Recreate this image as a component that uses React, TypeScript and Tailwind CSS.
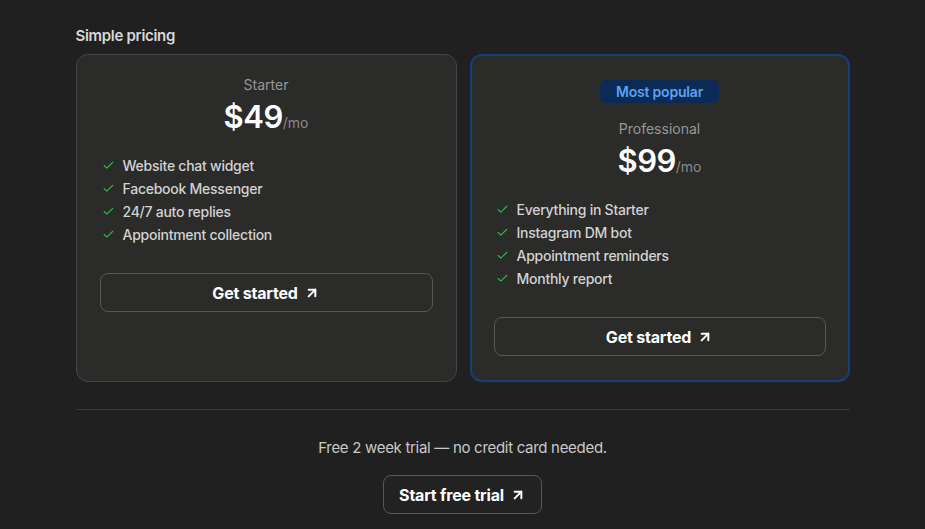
import { ArrowUpRight, Check } from "lucide-react";

interface Plan {
  name: string;
  price: string;
  features: string[];
  popular?: boolean;
}

const plans: Plan[] = [
  {
    name: "Starter",
    price: "$49",
    features: ["Website chat widget", "Facebook Messenger", "24/7 auto replies", "Appointment collection"],
  },
  {
    name: "Professional",
    price: "$99",
    popular: true,
    features: ["Everything in Starter", "Instagram DM bot", "Appointment reminders", "Monthly report"],
  },
];

const PlanCard = ({ plan }: { plan: Plan }) => {
  return (
    <div
      className={
        plan.popular
          ? "flex flex-col rounded-xl border-2 border-[#163d7c] bg-[#2b2b2a] px-[22px] pt-6 pb-6"
          : "flex flex-col rounded-xl border border-[#454545] bg-[#2b2b2a] px-[23px] pt-5 pb-6"
      }
    >
      {plan.popular && (
        <div className="mx-auto mb-4 flex h-[23px] items-center rounded-md bg-[#0b2a55] px-4 text-[14px] font-semibold tracking-[-0.2px] text-[#5aa2f2]">
          Most popular
        </div>
      )}
      <p className="text-center text-[14px] leading-5 text-[#979797]">{plan.name}</p>
      <div className="mt-[2px] flex items-baseline justify-center">
        <span className="text-[31px] leading-10 font-semibold tracking-[-0.5px] text-white">{plan.price}</span>
        <span className="text-[14px] text-[#8a8a8a]">/mo</span>
      </div>
      <ul className="mt-[17px] flex flex-col">
        {plan.features.map((f) => (
          <li key={f} className="flex items-center gap-[8px] pl-[2px] text-[14px] leading-[23px] font-medium tracking-[-0.25px] text-[#d2d2d2]">
            <Check size={13} strokeWidth={2} className="text-[#2fb84f]" />
            <span>{f}</span>
          </li>
        ))}
      </ul>
      <button className="mt-[27px] flex h-[39px] w-full items-center justify-center gap-1.5 rounded-lg border border-[#575757] text-[16px] font-bold tracking-[-0.2px] text-white">
        Get started
        <ArrowUpRight size={16} strokeWidth={3} />
      </button>
    </div>
  );
};

const App = () => {
  return (
    <div className="min-h-[529px] bg-[#202020] pt-[26px] font-['Inter',sans-serif]">
      <div className="mx-auto w-[774px]">
        <h2 className="text-[15px] leading-5 font-semibold tracking-[-0.3px] text-[#d8d8d8]">Simple pricing</h2>
        <div className="mt-2 grid grid-cols-[381px_380px] gap-[13px]">
          {plans.map((p) => (
            <PlanCard key={p.name} plan={p} />
          ))}
        </div>
        <div className="mt-[27px] h-px bg-[#393939]" />
        <p className="mt-[27px] text-center text-[15px] leading-[22px] tracking-[-0.3px] text-[#c9c9c9]">
          Free 2 week trial — no credit card needed.
        </p>
        <div className="mt-4 flex justify-center">
          <button className="flex h-[39px] w-[159px] items-center justify-center gap-1.5 rounded-lg border border-[#575757] bg-[#222222] text-[16px] font-bold tracking-[-0.2px] text-white">
            Start free trial
            <ArrowUpRight size={16} strokeWidth={3} />
          </button>
        </div>
      </div>
    </div>
  );
};

export default App;
